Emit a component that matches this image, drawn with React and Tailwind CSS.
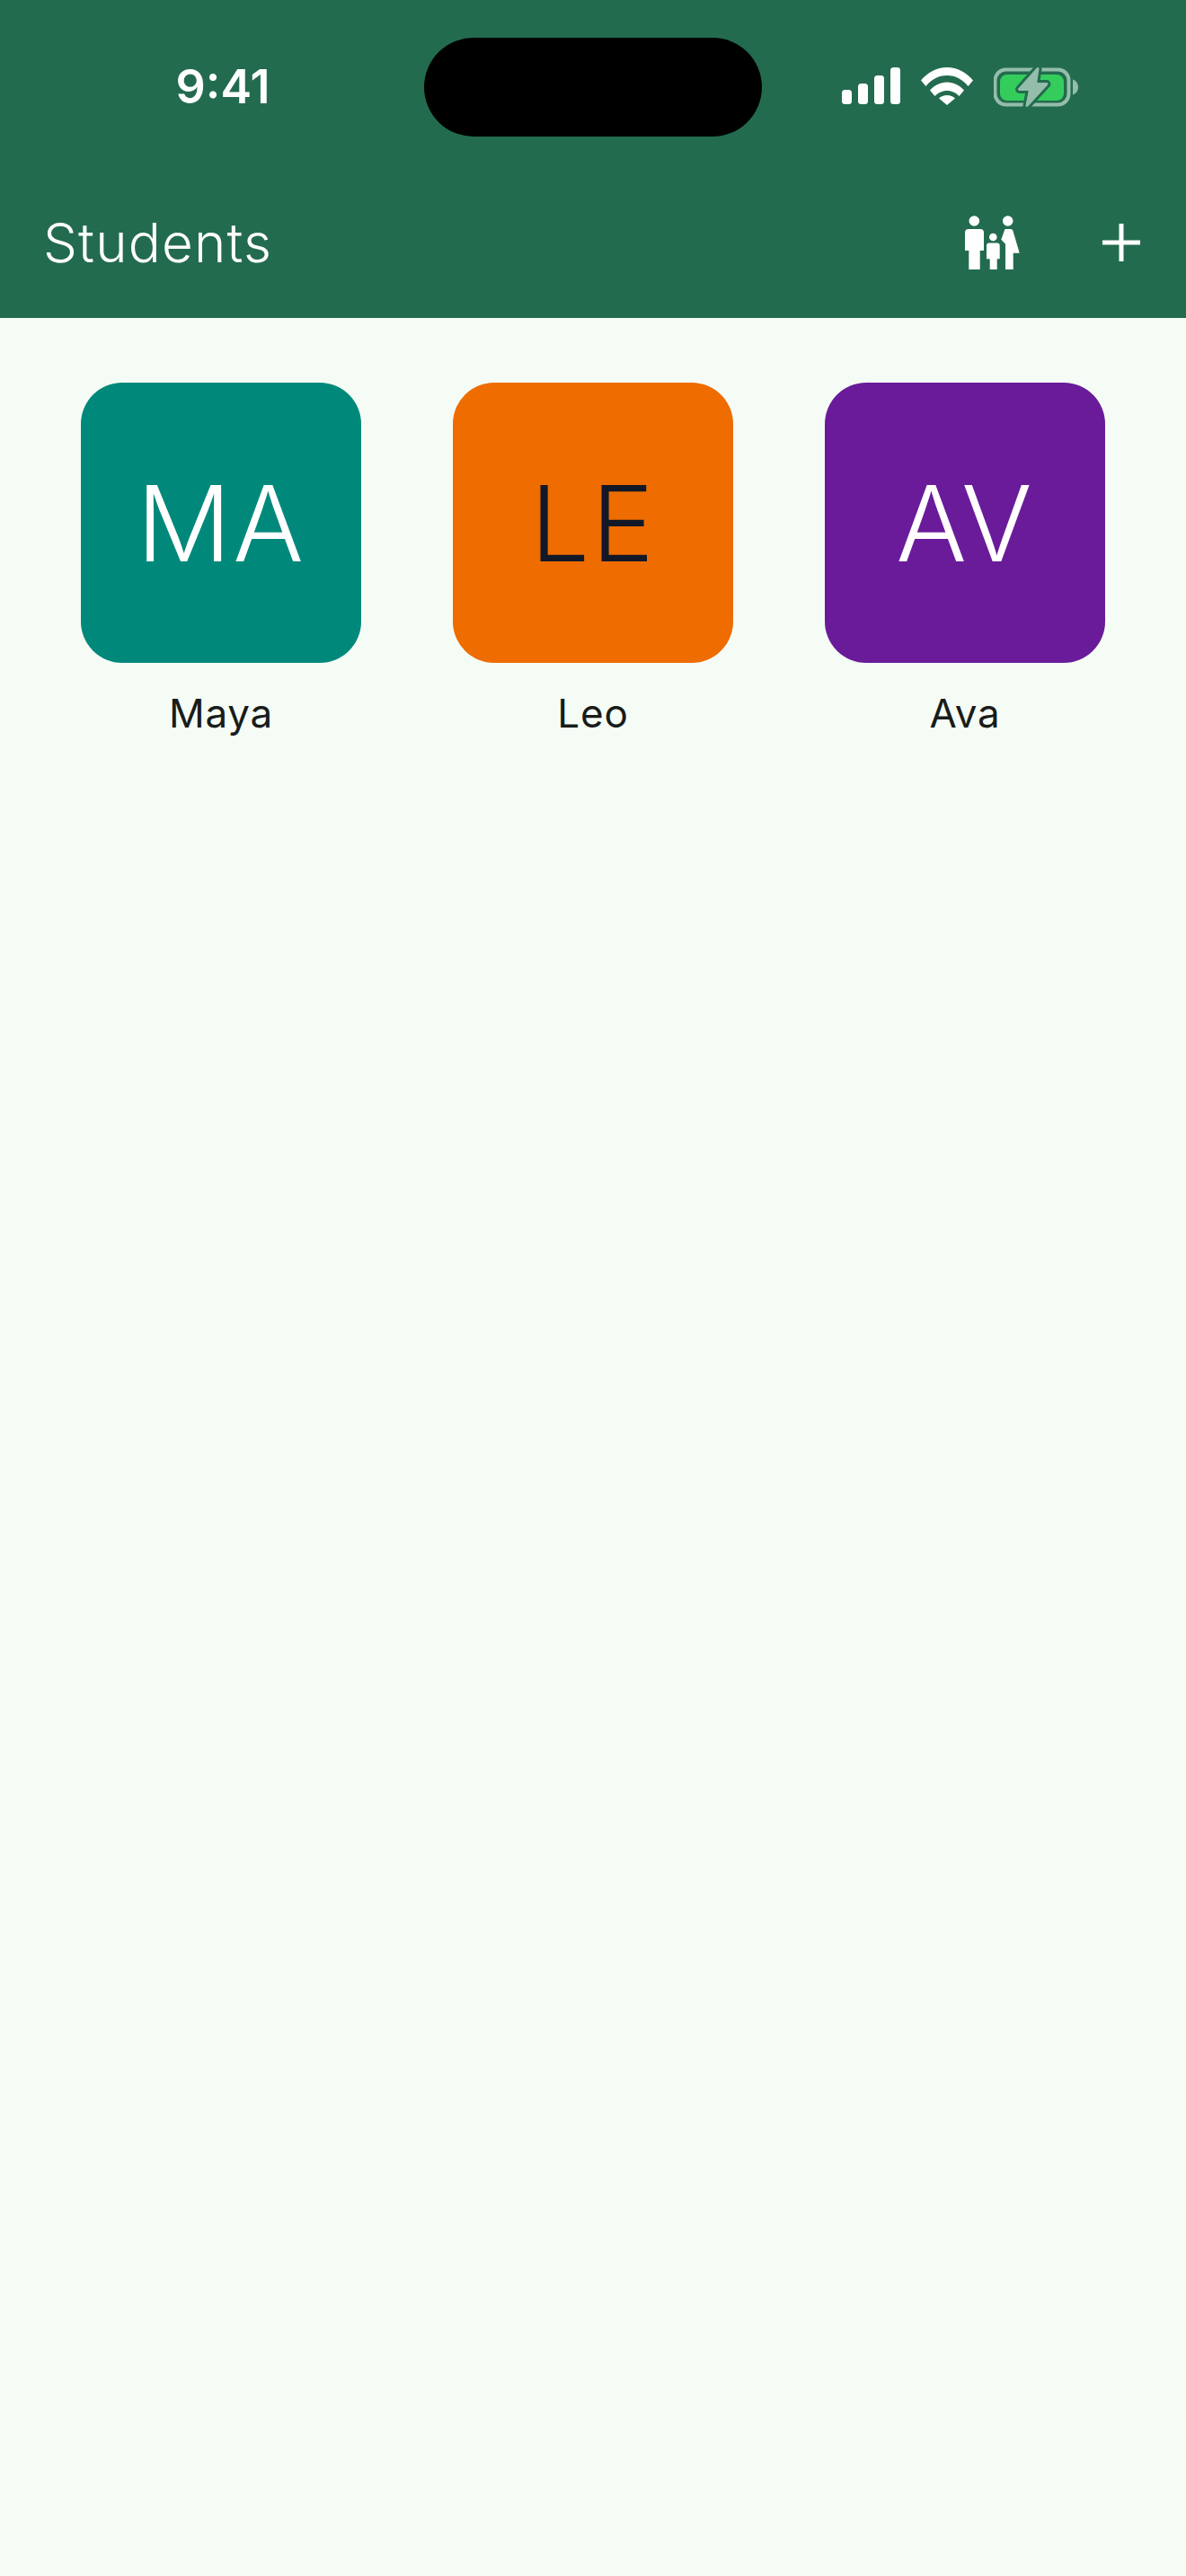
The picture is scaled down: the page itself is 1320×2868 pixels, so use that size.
const students = [
  { name: "Maya", initials: "MA", tile: "bg-[#00897b] text-white" },
  { name: "Leo", initials: "LE", tile: "bg-[#ef6c00] text-[#111827]" },
  { name: "Ava", initials: "AV", tile: "bg-[#6a1b9a] text-white" },
];

function SignalIcon() {
  return (
    <svg width="65" height="41" viewBox="0 0 65 41" fill="#fff">
      <rect x="0" y="25" width="11" height="16" rx="3.5" />
      <rect x="18" y="18" width="11" height="23" rx="3.5" />
      <rect x="36" y="9" width="11" height="32" rx="3.5" />
      <rect x="54" y="0" width="11" height="41" rx="3.5" />
    </svg>
  );
}

function WifiIcon() {
  return (
    <svg width="58" height="42" viewBox="0 0 58 42" fill="#fff">
      <path d="M0 14.500C7.500 5.500 17.500 0 29 0s21.500 5.500 29 14.500l-5.500 6.500C46.500 13.500 38.500 9 29 9S11.500 13.500 5.500 21z" />
      <path d="M10 25.500C15 20 21.500 16.500 29 16.500s14 3.500 19 9L42.500 32C39 28.500 34.500 26 29 26s-10 2.500-13.500 6z" />
      <path d="M20 34.500c2.200-2.200 5.500-3.500 9-3.500s6.800 1.300 9 3.500L29 42z" />
    </svg>
  );
}

function BatteryIcon() {
  const bolt = "M49 2.500 28.500 25.500h12L37 43.500 59 19.500H46.500z";
  return (
    <svg width="94" height="46" viewBox="0 0 94 46">
      <rect x="1.500" y="3.500" width="82" height="39" rx="12" fill="none" stroke="#94bdaa" strokeWidth="4" />
      <rect x="7" y="9" width="71" height="29" rx="8" fill="#34cd5c" />
      <path d="M88 14.500c3.500 1 6 4.500 6 8.500s-2.500 7.500-6 8.500z" fill="#94bdaa" />
      <path d={bolt} fill="#236b4f" stroke="#236b4f" strokeWidth="9" strokeLinejoin="round" />
      <path d={bolt} fill="#94bdaa" stroke="#94bdaa" strokeWidth="3" strokeLinejoin="round" />
    </svg>
  );
}

function FamilyIcon() {
  return (
    <svg width="62" height="60" viewBox="24 20 62 60" fill="#fff">
      <circle cx="34.300" cy="26" r="5.800" />
      <path d="M24 39a4 4 0 0 1 4-4h13a4 4 0 0 1 4 4v20h-4.300v21H28.300V59H24z" />
      <circle cx="55.300" cy="44" r="4.300" />
      <path d="M48 53.500a3 3 0 0 1 3-3h8.700a3 3 0 0 1 3 3v14.800h-3V80h-8V68.300H48z" />
      <circle cx="71.700" cy="26" r="5.800" />
      <path d="M68.500 35H75a2.500 2.500 0 0 1 2.300 1.600L84.700 61.700h-7V80H69V51.700L64.300 46.700z" />
    </svg>
  );
}

function PlusIcon() {
  return (
    <svg width="42" height="42" viewBox="0 0 42 42" fill="#fff">
      <rect x="18.500" y="0" width="5" height="42" />
      <rect x="0" y="18.500" width="42" height="5" />
    </svg>
  );
}

export default function App() {
  return (
    <div className="min-h-[2868px] bg-[#f5fcf5] font-['Inter',sans-serif]">
      <header className="h-[354px] bg-[#236b4f] text-white">
        <div className="flex h-[152px] pt-[42px]">
          <div className="flex h-[110px] w-[472px] items-center justify-center pl-[24px] text-[52px] font-semibold leading-none">
            9:41
          </div>
          <div className="h-[110px] w-[376px] rounded-[55px] bg-black" />
          <div className="ml-[89px] flex items-start gap-[23px] pt-[33px]">
            <SignalIcon />
            <WifiIcon />
            <div className="-mt-[1px]">
              <BatteryIcon />
            </div>
          </div>
        </div>
        <div className="flex h-[202px] items-center pt-[34px]">
          <h1 className="ml-[48px] text-[60px] font-light leading-none tracking-[1.2px]">Students</h1>
          <div className="ml-auto mr-[91px]">
            <FamilyIcon />
          </div>
          <div className="mr-[51px]">
            <PlusIcon />
          </div>
        </div>
      </header>
      <main className="grid grid-cols-3 gap-[102px] px-[90px] pt-[72px]">
        {students.map((s) => (
          <div key={s.name} className="flex flex-col items-center">
            <div className={`flex h-[312px] w-[312px] items-center justify-center rounded-[46px] text-[117px] font-light leading-none tracking-[2px] ${s.tile}`}>
              {s.initials}
            </div>
            <div className="mt-[28px] text-[44px] leading-[56px] tracking-[0.8px] text-[#191c1a]">{s.name}</div>
          </div>
        ))}
      </main>
    </div>
  );
}
